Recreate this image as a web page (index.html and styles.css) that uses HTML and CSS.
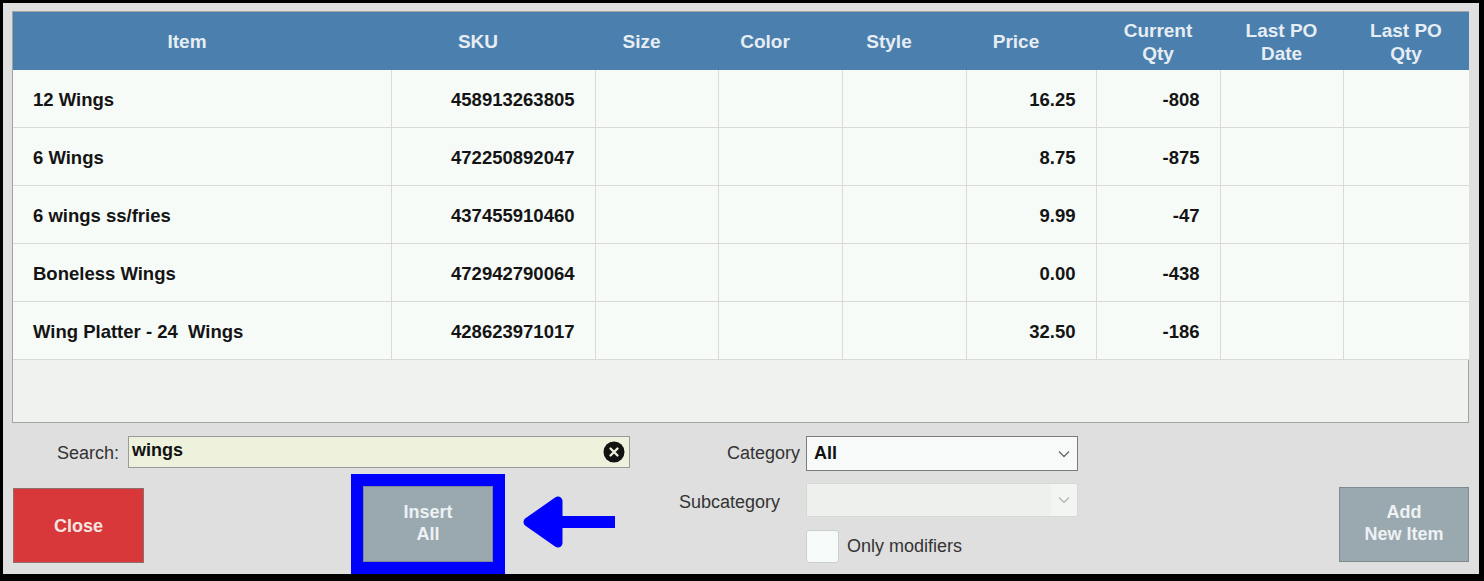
FILE: index.html
```html
<!DOCTYPE html>
<html lang="en">
<head>
    <meta charset="UTF-8">
    <meta name="viewport" content="width=device-width, initial-scale=1.0">
    <title>Item Lookup</title>
    <link rel="stylesheet" href="styles.css">
</head>
<body>
    <div class="window">
        <!-- Item grid -->
        <div class="grid">
            <table class="items">
                <colgroup>
                    <col class="col-item">
                    <col class="col-sku">
                    <col class="col-size">
                    <col class="col-color">
                    <col class="col-style">
                    <col class="col-price">
                    <col class="col-qty">
                    <col class="col-podate">
                    <col class="col-poqty">
                </colgroup>
                <thead>
                    <tr>
                        <th class="shift">Item</th>
                        <th class="shift">SKU</th>
                        <th class="shift">Size</th>
                        <th class="shift">Color</th>
                        <th class="shift">Style</th>
                        <th class="shift">Price</th>
                        <th>Current<br>Qty</th>
                        <th>Last PO<br>Date</th>
                        <th>Last PO<br>Qty</th>
                    </tr>
                </thead>
                <tbody>
                    <tr>
                        <td class="name">12 Wings</td>
                        <td class="num">458913263805</td>
                        <td></td><td></td><td></td>
                        <td class="num">16.25</td>
                        <td class="num">-808</td>
                        <td></td><td></td>
                    </tr>
                    <tr>
                        <td class="name">6 Wings</td>
                        <td class="num">472250892047</td>
                        <td></td><td></td><td></td>
                        <td class="num">8.75</td>
                        <td class="num">-875</td>
                        <td></td><td></td>
                    </tr>
                    <tr>
                        <td class="name">6 wings ss/fries</td>
                        <td class="num">437455910460</td>
                        <td></td><td></td><td></td>
                        <td class="num">9.99</td>
                        <td class="num">-47</td>
                        <td></td><td></td>
                    </tr>
                    <tr>
                        <td class="name">Boneless Wings</td>
                        <td class="num">472942790064</td>
                        <td></td><td></td><td></td>
                        <td class="num">0.00</td>
                        <td class="num">-438</td>
                        <td></td><td></td>
                    </tr>
                    <tr>
                        <td class="name">Wing Platter - 24&nbsp; Wings</td>
                        <td class="num">428623971017</td>
                        <td></td><td></td><td></td>
                        <td class="num">32.50</td>
                        <td class="num">-186</td>
                        <td></td><td></td>
                    </tr>
                </tbody>
            </table>
        </div>

        <div class="controls">
            <div class="left">
                <div class="search-row">
                    <span class="search-label">Search:</span>
                    <div class="search-field">
                        <span class="search-text">wings</span>
                        <svg class="clear" width="22" height="22" viewBox="0 0 22 22">
                            <circle cx="11" cy="11" r="10.5" fill="#111"/>
                            <path d="M7.5 7.5 L14.5 14.5 M14.5 7.5 L7.5 14.5" stroke="#e8ecd8" stroke-width="2.4" stroke-linecap="round"/>
                        </svg>
                    </div>
                </div>
                <div class="action-row">
                    <button class="btn btn-close">Close</button>
                    <div class="highlight">
                        <button class="btn btn-grey btn-insert">Insert<br>All</button>
                    </div>
                    <svg class="arrow" width="93" height="52" viewBox="0 0 93 52">
                        <polygon points="6,26 36,5 36,47" fill="#0000ff" stroke="#0000ff" stroke-width="9" stroke-linejoin="round"/>
                        <rect x="36" y="20" width="57" height="12" fill="#0000ff"/>
                    </svg>
                </div>
            </div>

            <div class="filters">
                <span class="filter-label">Category</span>
                <div class="select">
                    <span class="select-value">All</span>
                    <svg class="chevron" width="12" height="8" viewBox="0 0 12 8">
                        <path d="M1 1.5 L6 6.5 L11 1.5" fill="none" stroke="#666" stroke-width="1.3"/>
                    </svg>
                </div>
                <span class="filter-label sub">Subcategory</span>
                <div class="select disabled">
                    <span class="select-value"></span>
                    <span class="select-arrow">
                        <svg class="chevron" width="12" height="8" viewBox="0 0 12 8">
                            <path d="M1 1.5 L6 6.5 L11 1.5" fill="none" stroke="#b5b8b5" stroke-width="1.3"/>
                        </svg>
                    </span>
                </div>
                <span></span>
                <div class="check-row">
                    <span class="checkbox"></span>
                    <span>Only modifiers</span>
                </div>
            </div>

            <button class="btn btn-grey btn-add">Add<br>New Item</button>
        </div>
    </div>
</body>
</html>
```

FILE: styles.css
```css
html, body {
    margin: 0;
    padding: 0;
}

body {
    background: #000;
    font-family: 'Liberation Sans', Arial, sans-serif;
    width: 1484px;
    height: 581px;
    overflow: hidden;
}

.window {
    margin: 3px 5px 0 3px;
    width: 1476px;
    height: 571px;
    box-sizing: border-box;
    padding: 8px 10px 0 9px;
    background: #dfdfdf;
    overflow: hidden;
}

.grid {
    height: 412px;
    box-sizing: border-box;
    border: 1px solid #a3a3a3;
    background: #eff2ef;
}

.items {
    width: 1456px;
    border-collapse: collapse;
    table-layout: fixed;
}

.col-item { width: 378px; }
.col-sku { width: 204px; }
.col-size { width: 123px; }
.col-color { width: 124px; }
.col-style { width: 124px; }
.col-price { width: 130px; }
.col-qty { width: 124px; }
.col-podate { width: 123px; }
.col-poqty { width: 126px; }

.items th {
    height: 57px;
    padding: 1px 0 0;
    background: #4a7fae;
    color: #e6edf3;
    font-size: 19px;
    font-weight: bold;
    line-height: 23px;
    text-align: center;
}

.items th.shift {
    padding-right: 30px;
}

.items td {
    height: 55px;
    padding: 2px 0 0;
    background: #f7fbf8;
    border-bottom: 1px solid #d9d9d9;
    border-right: 1px solid #d9d9d9;
    color: #141414;
    font-size: 18.5px;
    font-weight: bold;
}

.items td:last-child {
    border-right: none;
}

.items td.name {
    padding-left: 20px;
}

.items td.num {
    text-align: right;
    padding-right: 20px;
}

/* bottom controls */
.controls {
    display: flex;
    height: 151px;
}

.left {
    width: 618px;
}

.search-row {
    display: flex;
    align-items: center;
    margin-top: 13px;
    height: 32px;
}

.search-label {
    width: 107px;
    text-align: right;
    font-size: 18px;
    color: #333;
    padding-top: 2px;
}

.search-field {
    margin-left: 9px;
    width: 502px;
    height: 32px;
    box-sizing: border-box;
    border: 1px solid #9a9a9a;
    background: #eef2dc;
    display: flex;
    align-items: center;
    padding: 0 4px 0 3px;
}

.search-text {
    font-size: 18px;
    font-weight: bold;
    color: #111;
    margin-top: -4px;
}

.clear {
    margin-left: auto;
}

.action-row {
    display: flex;
    align-items: flex-start;
    margin-top: 6px;
}

.btn {
    font-family: 'Liberation Sans', Arial, sans-serif;
    font-size: 18px;
    font-weight: bold;
    line-height: 22px;
    padding: 0;
    width: 131px;
    height: 75px;
    border: 1px solid #7f8a90;
    cursor: pointer;
}

.btn-close {
    margin-top: 14px;
    margin-left: 1px;
    background: #d9383a;
    border-color: #8c6f6f;
    color: #f6e4e0;
}

.btn-grey {
    background: #9aa8b0;
    color: #eef2f4;
}

.highlight {
    margin-left: 207px;
    border: 12px solid #0000ff;
    border-bottom-width: 13px;
    line-height: 0;
}

.btn-insert {
    width: 130px;
    height: 76px;
    padding-bottom: 2px;
}

.arrow {
    margin-left: 17px;
    margin-top: 22px;
}

.filters {
    margin-left: 10px;
    margin-top: 13px;
    display: grid;
    grid-template-columns: 160px 272px;
    grid-template-rows: 35px 34px 34px;
    column-gap: 6px;
    row-gap: 12px;
    align-items: center;
    font-size: 18px;
    color: #333;
}

.filter-label {
    text-align: right;
}

.filter-label.sub {
    padding-right: 20px;
    padding-top: 5px;
}

.select {
    height: 100%;
    box-sizing: border-box;
    border: 1px solid #7c7c7c;
    background: #f7faf8;
    display: flex;
    align-items: center;
    padding-left: 7px;
}

.select-value {
    font-weight: bold;
    color: #111;
    flex: 1;
}

.select .chevron {
    margin-right: 7px;
}

.select.disabled {
    border-color: #d6d9d6;
    background: #eef0ee;
    padding-left: 0;
    align-items: stretch;
}

.select-arrow {
    width: 26px;
    background: #f3f5f3;
    display: flex;
    align-items: center;
    justify-content: center;
}

.select-arrow .chevron {
    margin: 0;
}

.check-row {
    display: flex;
    align-items: center;
    gap: 8px;
    height: 100%;
}

.checkbox {
    width: 33px;
    height: 33px;
    box-sizing: border-box;
    border: 1px solid #c9cfd4;
    border-radius: 3px;
    background: #f6faf9;
}

.btn-add {
    margin-left: auto;
    margin-top: 64px;
    width: 130px;
    height: 75px;
    padding-bottom: 4px;
}
```
